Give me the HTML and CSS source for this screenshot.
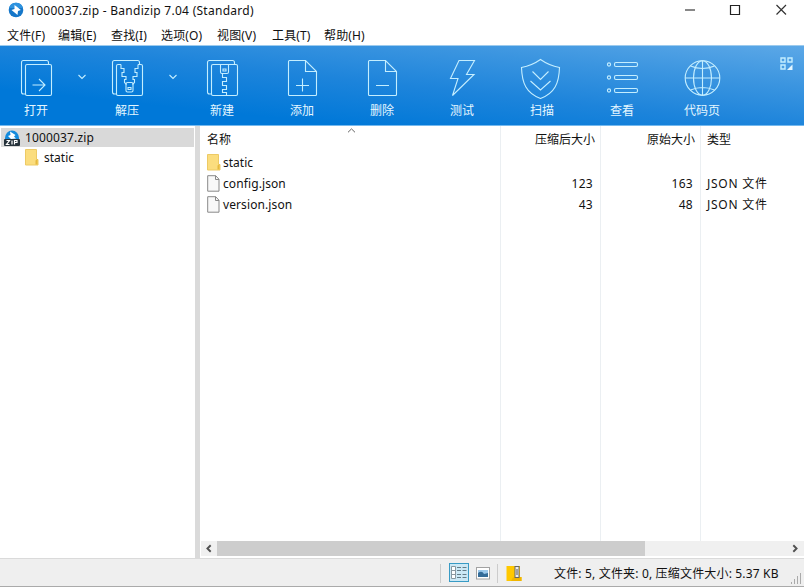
FILE: index.html
```
<!DOCTYPE html>
<html lang="zh-CN">
<head>
<meta charset="utf-8">
<title>1000037.zip - Bandizip 7.04 (Standard)</title>
<link rel="stylesheet" href="styles.css">
</head>
<body>
<div class="window">
  <header class="titlebar">
    <svg class="app-icon" viewBox="0 0 16 16"><circle cx="8" cy="8" r="7.3" fill="#1677c9"/><path d="M1 6a7.3 7.3 0 0 1 14 0z" fill="#2e93df"/><path d="M6.500 3 9.500 5.200 12.800 8 10 9 9.500 13 6.800 10.800 3.500 8 6.500 7z" fill="#fff"/></svg>
    <span class="title">1000037.zip - Bandizip 7.04 (Standard)</span>
    <svg class="controls" viewBox="680 0 124 20" fill="none"><path d="M685 10h10" stroke="#555" stroke-width="1.4"/><path d="M730.5 5.500h9v9h-9z" stroke="#222" stroke-width="1.2"/><path d="M776.500 5l9.500 9.500M786 5l-9.500 9.500" stroke="#333" stroke-width="1.2"/></svg>
  </header>
  <nav class="menu">
    <span class="m1">文件(F)</span><span class="m2">编辑(E)</span><span class="m3">查找(I)</span><span class="m4">选项(O)</span><span class="m5">视图(V)</span><span class="m6">工具(T)</span><span class="m7">帮助(H)</span>
  </nav>
  <div class="toolbar">
    <div class="tool narrow"><svg viewBox="14 57 44 42"><path d="M25.500 94h-2q-2 0-2-2V62.500q0-2 2-2h23q2 0 2 2v2"/><rect x="25.500" y="64.500" width="26" height="31" rx="1.500"/><path d="M32.500 85H45M39 79l6 6-6 6"/></svg><span>打开</span></div>
    <div class="drop"><svg viewBox="0 0 10 6"><path d="M1.500 1 5 4.500 8.500 1"/></svg></div>
    <div class="tool narrow"><svg viewBox="105 57 44 42"><path d="M116.500 94h-2q-2 0-2-2V62.500q0-2 2-2h23q2 0 2 2v2"/><path d="M121 64.500h-3q-1.500 0-1.500 1.500v28q0 1.500 1.500 1.500h23q1.500 0 1.500-1.500V66q0-1.500-1.500-1.500h-3"/><path d="M121 64.500v4h3v4h-2v4h4v3h-1.500v3l2 2M138 64.500v4h-3v4h2v4h-4v3h1.500v3l-2 2"/><rect x="126" y="82.500" width="7" height="9.500" rx="1.500"/><path d="M128 87.500h3v2h-3z"/></svg><span>解压</span></div>
    <div class="drop"><svg viewBox="0 0 10 6"><path d="M1.500 1 5 4.500 8.500 1"/></svg></div>
    <div class="tool"><svg viewBox="200 57 44 42"><path d="M211.500 94h-2q-2 0-2-2V62.500q0-2 2-2h23q2 0 2 2v2"/><rect x="211.500" y="64.500" width="26" height="31" rx="1.500"/><path d="M220.500 64.500V72q0 1.500 1.500 1.500h5q1.500 0 1.500-1.500v-7.500M223 69h3v2h-3zM224.500 73.500h-2v4h4v4h-4v4h4v4h-4v3h4v3"/></svg><span>新建</span></div>
    <div class="tool"><svg viewBox="280 57 44 42"><path d="M305.500 60.500h-16q-1 0-1 1v33q0 1 1 1h26q1 0 1-1v-23zM305.500 60.500v11h11M302.500 78.500v13M296 85.500h13"/></svg><span>添加</span></div>
    <div class="tool"><svg viewBox="360 57 44 42"><path d="M385.500 60.500h-16q-1 0-1 1v33q0 1 1 1h26q1 0 1-1v-23zM385.500 60.500v11h11M376 85.500h13"/></svg><span>删除</span></div>
    <div class="tool"><svg viewBox="440 57 44 42"><path d="M459 60.500h15.500L466.500 74.500h7.500L452.500 95.500 458 78.500h-7.500z"/></svg><span>测试</span></div>
    <div class="tool scan"><svg viewBox="519 57 44 42"><path d="M540.500 59.500Q532 65.500 521.500 67.500C522 83 526 93 540.500 98.500C555 93 559 83 559.500 67.500Q549 65.500 540.500 59.500zM532.500 71.500l8 8 8-8M530.500 81l10 9 10-9"/></svg><span>扫描</span></div>
    <div class="tool"><svg viewBox="600 57 44 42"><circle cx="609" cy="64.500" r="1.600"/><circle cx="609" cy="77.500" r="1.600"/><circle cx="609" cy="90.500" r="1.600"/><rect x="614.500" y="62.500" width="23" height="4" rx="1.500"/><rect x="614.500" y="75.500" width="23" height="4" rx="1.500"/><rect x="614.500" y="88.500" width="23" height="4" rx="1.500"/></svg><span>查看</span></div>
    <div class="tool"><svg viewBox="680 57 44 42"><circle cx="702.500" cy="78" r="17.300"/><ellipse cx="702.500" cy="78" rx="9" ry="17.300"/><path d="M702.500 60.500v35M685 78h35M690.500 66q12 5 24 0M690.500 90q12-5 24 0"/></svg><span>代码页</span></div>
    <svg class="layout-icon" viewBox="0 0 13 13"><path d="M1 1h4v4H1zM8 1h4v4H8zM1 8h4v4H1z"/><path class="solid" d="M12.500 7.500V13H7z"/></svg>
  </div>
  <main class="content">
    <aside class="tree">
      <div class="node root"><svg class="zip-icon" viewBox="0 0 16 16"><path d="M1 8a7 7.500 0 0 1 14 0v3H1z" fill="#158bdd"/><path d="M6 1.500 11.500 5 10 6.500 12 8.500 7 9 4 6 6.500 5z" fill="#fff"/><rect y="9" width="16" height="7" rx="1" fill="#26323b"/><path d="M2.500 10.500h3l-3 4h3M8 10.500v4M10.500 14.500v-4H13v2h-2.500" fill="none" stroke="#fff" stroke-width="1.200"/></svg><span class="root-name">1000037.zip</span></div>
      <div class="node child"><svg class="folder" viewBox="0 0 14 17"><path d="M.5.500h11v10h1.500v5.500H.5z" fill="#fbdd7e" stroke="#edca65"/><path d="M10.500 15.500v-4l2-1.500v5.500z" fill="#e6b93f"/></svg><span class="static">static</span></div>
    </aside>
    <section class="list">
      <div class="grid">
        <div class="col name">
          <svg class="sort" viewBox="0 0 9 5"><path d="M1 4.300 4.500.9 8 4.300" fill="none" stroke="#666"/></svg>
          <div class="head">名称</div>
          <div class="row"><svg class="folder" viewBox="0 0 14 17"><path d="M.5.500h11v10h1.500v5.500H.5z" fill="#fbdd7e" stroke="#edca65"/><path d="M10.500 15.500v-4l2-1.500v5.500z" fill="#e6b93f"/></svg><span class="static">static</span></div>
          <div class="row"><svg class="file" viewBox="0 0 13 17"><path d="M.7.700h8l3.300 3.500v12H.7z" fill="#f8f8f8" stroke="#898989"/><path d="M8.500.700v3.800H12" fill="none" stroke="#898989"/></svg><span class="config">config.json</span></div>
          <div class="row"><svg class="file" viewBox="0 0 13 17"><path d="M.7.700h8l3.300 3.500v12H.7z" fill="#f8f8f8" stroke="#898989"/><path d="M8.500.700v3.800H12" fill="none" stroke="#898989"/></svg><span class="version">version.json</span></div>
        </div>
        <div class="col size"><div class="head">压缩后大小</div><div class="row"></div><div class="row">123</div><div class="row">43</div></div>
        <div class="col size"><div class="head">原始大小</div><div class="row"></div><div class="row">163</div><div class="row">48</div></div>
        <div class="col type"><div class="head">类型</div><div class="row"></div><div class="row">JSON 文件</div><div class="row">JSON 文件</div></div>
      </div>
      <div class="scrollbar"><svg viewBox="0 0 16 16"><path d="M9.800 4.500 6.300 8l3.500 3.500"/></svg><div class="track"><div class="thumb"></div></div><svg viewBox="0 0 16 16"><path d="M6.200 4.500 9.700 8l-3.500 3.500"/></svg></div>
    </section>
  </main>
  <footer class="status">
    <i class="sep"></i>
    <svg class="details" viewBox="0 0 20 20"><rect x=".5" y=".5" width="19" height="18" fill="#cbe8f5" stroke="#389bc5"/><path d="M2.500 3.500h4v12h-4zM2.500 7.500h4M2.500 11.500h4" fill="#fff" stroke="#8998a0"/><path d="M8 4.500h4M13.500 4.500h4M8 7.500h4M13.500 7.500h4M8 11.500h4M13.500 11.500h4M8 14.500h4M13.500 14.500h4" stroke="#647c87"/></svg>
    <svg class="thumbs" viewBox="0 0 14 13"><rect x=".5" y=".5" width="13" height="11.500" fill="#fff" stroke="#a2a2a2"/><path d="M2 3h10v7H2z" fill="#9ac7ea"/><path d="M2 6q4-3 6 1l4-1v4H2z" fill="#356c98"/></svg>
    <i class="sep second"></i>
    <svg class="archive" viewBox="0 0 16 17"><path d="M.5 1H14v11h1.500v4H.5z" fill="#ffc800"/><path d="M7 12.500 14 12h1.500v4H5z" fill="#f0b500"/><rect x="9" y="1.500" width="4" height="11" fill="#eee" stroke="#666"/><path d="M11 4v6" stroke="#555"/></svg>
    <span class="summary">文件: 5, 文件夹: 0, 压缩文件大小: 5.37 KB</span>
    <svg class="grip" viewBox="0 0 10 11"><path d="M.5 9v2M3.500 6v5M6.500 3v8M9.500 0v11" stroke="#aaa"/></svg>
  </footer>
</div>
</body>
</html>
```
FILE: styles.css
```
* { box-sizing: border-box; }
body { margin: 0; overflow: hidden; background: #fff; color: #111; font: 12px/16px "Noto Sans", "Noto Sans CJK SC", sans-serif; }
svg { display: block; flex: none; }
span { white-space: nowrap; }
.window { width: 804px; height: 587px; display: flex; flex-direction: column; }
.titlebar { height: 21px; display: flex; padding-left: 8px; }
.app-icon { width: 16px; height: 16px; margin-top: 2px; }
.title { margin: 3px 0 0 5px; letter-spacing: .27px; }
.controls { width: 124px; height: 20px; margin-left: auto; }
.menu { height: 24px; display: flex; padding: 7px 0 0 7px; letter-spacing: .15px; }
.m1 { width: 51px; } .m2 { width: 53px; } .m3 { width: 50px; } .m4 { width: 56px; } .m5 { width: 55px; } .m6 { width: 52px; }
.toolbar { height: 81px; display: flex; color: #e5f7ff; border-top: 1px solid #9ccbee; border-bottom: 1px solid #75b9ee; background: linear-gradient(186deg, #5ca8e7 0%, #3b95e0 25%, #1d84db 50%, #0078d8 78%); }
.toolbar svg { fill: none; stroke: #c4eeff; stroke-width: 1.1; }
.tool { width: 80px; display: flex; flex-direction: column; align-items: center; padding-top: 11px; }
.narrow { width: 72px; }
.tool svg { width: 44px; height: 42px; }
.tool span { margin-top: 4px; }
.scan svg { margin-right: 2px; }
.drop { width: 19px; padding: 28px 0 0 5px; }
.drop svg { width: 10px; height: 6px; }
.toolbar .layout-icon { width: 13px; height: 13px; margin: 11px 11px 0 auto; stroke-width: 1.4; }
.toolbar .layout-icon .solid { fill: #e5f7ff; stroke: none; }
.content { height: 432px; display: flex; }
.tree { width: 200px; border-right: 5px solid #dadada; padding: 2px 0 0 1px; }
.node { display: flex; align-items: center; }
.root { width: 193px; height: 19px; background: #d9d9d9; padding-left: 3px; }
.zip-icon { width: 16px; height: 16px; margin-right: 5px; }
.root-name { letter-spacing: .15px; }
.child { height: 21px; padding-left: 24px; }
.folder { width: 14px; height: 17px; margin-right: 2px; }
.child .folder { margin-right: 5px; }
.file { width: 13px; height: 17px; margin-right: 3px; }
.list { width: 604px; display: flex; flex-direction: column; padding-left: 1px; }
.grid { height: 415px; display: grid; grid-template-columns: 300px 100px 100px 1fr; }
.col { border-right: 1px solid #ebeff2; position: relative; }
.type { border: 0; padding-left: 6px; }
.type .row { letter-spacing: .75px; }
.name { padding-left: 6px; }
.head { height: 26px; line-height: 28px; }
.row { height: 21px; display: flex; align-items: center; }
.sort { position: absolute; left: 146px; top: 2px; width: 9px; height: 5px; }
.size .head { text-align: right; padding-right: 5px; }
.size .row { justify-content: flex-end; padding-right: 7px; letter-spacing: .3px; }
.config, .version { letter-spacing: .1px; }
.scrollbar { height: 15px; display: flex; padding-right: 1px; background: #f0f0f0; }
.scrollbar svg { width: 16px; height: 15px; fill: none; stroke: #505050; stroke-width: 2; }
.track { flex: 1; }
.thumb { width: 428px; height: 15px; background: #cdcdcd; }
.status { height: 29px; display: flex; background: #efefef; border-top: 1px solid #dadada; border-bottom: 1px solid #aaa; padding-left: 440px; }
.sep { width: 1px; height: 19px; background: #ccc; margin-top: 5px; }
.second { margin-left: 7px; }
.details { width: 20px; height: 20px; margin: 4px 0 0 8px; }
.thumbs { width: 14px; height: 13px; margin: 8px 0 0 7px; }
.archive { width: 16px; height: 17px; margin: 6px 0 0 8px; }
.summary { margin: 7px 0 0 32px; letter-spacing: .17px; }
.grip { width: 10px; height: 11px; margin: 14px 3px 0 auto; }
```
